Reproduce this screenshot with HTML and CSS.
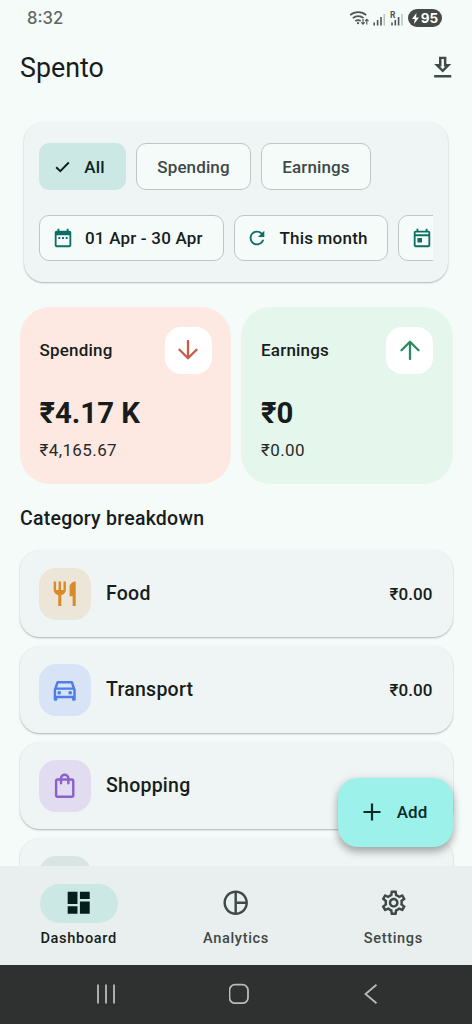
FILE: index.html
```html
<!DOCTYPE html>
<html lang="en">
<head>
<meta charset="utf-8">
<meta name="viewport" content="width=device-width, initial-scale=1">
<title>Spento</title>
<link rel="stylesheet" href="styles.css">
</head>
<body>
<div class="app">
  <div class="status">
    <span class="clock">8:32</span>
    <svg class="signals" width="56" height="20" viewBox="0 0 56 20" fill="none" stroke="#505553">
      <path d="M1.200 7.200a12 12 0 0 1 16 0M3.800 10.200a8.300 8.300 0 0 1 10.800 0M6.300 13a4.800 4.800 0 0 1 5.400 0" stroke-width="1.700"/>
      <circle cx="9" cy="15.200" r="1.100" fill="#505553" stroke="none"/>
      <path d="M14 11v5M12.300 14.400L14 16.200l1.700-1.800M17.800 16.500v-5M16.100 13.200l1.700-1.800 1.700 1.800" stroke-width="1.100"/>
      <path d="M25.200 14.500v3M28.600 12v5.500M32 9v8.500" stroke-width="1.600"/>
      <path d="M35.200 6v11.500" stroke-width="1.200" stroke="#adb2b0"/>
      <path d="M43 14.500v3M46.300 12v5.500M49.600 9v8.500" stroke-width="1.600"/>
      <path d="M53 6v11.500" stroke-width="1.200" stroke="#adb2b0"/>
      <text x="41" y="10.300" class="roaming">R</text>
    </svg>
    <span class="battery"><svg width="7" height="11" viewBox="0 0 7 11"><path d="M4.500 0L0 6h2.800L2 11l5-6.500H4z" fill="#fff"/></svg>95</span>
  </div>
  <header class="appbar">
    <h1>Spento</h1>
    <svg class="ic29 dl" viewBox="0 0 24 24"><path d="M19 9h-4V3H9v6H5l7 7 7-7zm-8 2V5h2v6h1.170L12 13.170 9.830 11H11zm-6 7h14v2H5z"/></svg>
  </header>
  <main class="content">
    <section class="filters">
      <div class="row">
        <button class="chip selected"><svg class="check" width="15" height="12" viewBox="0 0 15 12"><path d="M1.200 6.200l4.100 4L13.800 1.500" fill="none" stroke="#0d2221" stroke-width="2"/></svg>All</button>
        <button class="chip w-spending">Spending</button>
        <button class="chip w-earnings">Earnings</button>
      </div>
      <div class="row dates">
        <button class="chip date w-range"><svg class="ic22" viewBox="0 0 24 24"><path d="M9 11H7v2h2v-2zm4 0h-2v2h2v-2zm4 0h-2v2h2v-2zm2-7h-1V2h-2v2H8V2H6v2H5c-1.110 0-1.990.9-1.990 2L3 20c0 1.100.890 2 2 2h14c1.100 0 2-.9 2-2V6c0-1.100-.9-2-2-2zm0 16H5V9h14v11z"/></svg>01 Apr - 30 Apr</button>
        <button class="chip date w-month"><svg class="ic22" viewBox="0 0 24 24"><path d="M17.650 6.350C16.200 4.900 14.210 4 12 4c-4.420 0-7.990 3.580-7.990 8s3.570 8 7.990 8c3.730 0 6.840-2.550 7.730-6h-2.080c-.820 2.330-3.040 4-5.650 4-3.310 0-6-2.690-6-6s2.690-6 6-6c1.660 0 3.140.690 4.220 1.780L13 11h7V4l-2.350 2.350z"/></svg>This month</button>
        <button class="chip date w-today"><svg class="ic22" viewBox="0 0 24 24"><path d="M19 4h-1V2h-2v2H8V2H6v2H5c-1.110 0-1.990.9-1.990 2L3 20c0 1.100.890 2 2 2h14c1.100 0 2-.9 2-2V6c0-1.100-.9-2-2-2zm0 16H5V10h14v10zm0-12H5V6h14v2zM7 12h5v5H7z"/></svg></button>
      </div>
    </section>
    <section class="totals">
      <article class="total spending">
        <div class="total-head"><span>Spending</span><span class="badge"><svg width="20" height="20" viewBox="0 0 20 20"><path d="M10 1v17M1.500 9.800L10 18.300l8.500-8.500"/></svg></span></div>
        <div class="amount">₹4.17 K</div>
        <div class="exact">₹4,165.67</div>
      </article>
      <article class="total earnings">
        <div class="total-head"><span>Earnings</span><span class="badge"><svg width="20" height="20" viewBox="0 0 20 20"><path d="M10 19V2M1.500 10.200L10 1.700l8.500 8.500"/></svg></span></div>
        <div class="amount">₹0</div>
        <div class="exact">₹0.00</div>
      </article>
    </section>
    <h2>Category breakdown</h2>
    <ul class="list">
      <li class="item"><span class="tile food"><svg class="ic29" viewBox="0 0 24 24"><path d="M11 9H9V2H7v7H5V2H3v7c0 2.120 1.660 3.840 3.750 3.970V22h2.500v-9.030C11.340 12.840 13 11.120 13 9V2h-2v7zm5-3v8h2.500v8H21V2c-2.760 0-5 2.240-5 4z"/></svg></span><span class="name">Food</span><span class="value">₹0.00</span></li>
      <li class="item"><span class="tile transport"><svg class="ic29" viewBox="0 0 24 24"><path d="M18.920 6.010C18.720 5.420 18.160 5 17.500 5h-11c-.660 0-1.210.420-1.420 1.010L3 12v8c0 .550.450 1 1 1h1c.550 0 1-.450 1-1v-1h12v1c0 .550.450 1 1 1h1c.550 0 1-.450 1-1v-8l-2.080-5.990zM6.850 7h10.290l1.080 3.110H5.770L6.850 7zM19 17H5v-5h14v5z"/><circle cx="7.500" cy="14.500" r="1.500"/><circle cx="16.500" cy="14.500" r="1.500"/></svg></span><span class="name">Transport</span><span class="value">₹0.00</span></li>
      <li class="item"><span class="tile shopping"><svg class="ic29" viewBox="0 0 24 24"><path d="M18 6h-2c0-2.210-1.790-4-4-4S8 3.790 8 6H6c-1.100 0-2 .9-2 2v12c0 1.100.9 2 2 2h12c1.100 0 2-.9 2-2V8c0-1.100-.9-2-2-2zm-6-2c1.100 0 2 .9 2 2h-4c0-1.100.9-2 2-2zm6 16H6V8h2v2c0 .550.450 1 1 1s1-.450 1-1V8h4v2c0 .550.450 1 1 1s1-.450 1-1V8h2v12z"/></svg></span><span class="name">Shopping</span></li>
      <li class="item"><span class="tile other"></span></li>
    </ul>
    <button class="fab"><svg width="18" height="18" viewBox="0 0 18 18"><path d="M9 .5v17M.5 9h17" stroke="#0b2a28" stroke-width="2.200"/></svg>Add</button>
  </main>
  <nav class="tabs">
    <a class="tab active"><span class="pill"><svg class="ic29" viewBox="0 0 24 24"><path d="M3 13h8V3H3v10zm0 8h8v-6H3v6zm10 0h8V11h-8v10zm0-18v6h8V3h-8z"/></svg></span>Dashboard</a>
    <a class="tab"><span class="pill"><svg class="ic29" viewBox="0 0 24 24"><path d="M12 2C6.480 2 2 6.480 2 12s4.480 10 10 10 10-4.480 10-10S17.520 2 12 2zm1 2.070c3.610.450 6.480 3.330 6.930 6.930H13V4.070zM4 12c0-4.060 3.070-7.440 7-7.930v15.870c-3.930-.5-7-3.880-7-7.940zm9 7.930V13h6.930c-.450 3.610-3.320 6.480-6.930 6.930z"/></svg></span>Analytics</a>
    <a class="tab"><span class="pill"><svg class="ic29" viewBox="0 0 24 24"><path d="M19.43 12.98c.04-.32.07-.64.07-.98 0-.34-.03-.66-.07-.98l2.110-1.650c.19-.15.24-.42.12-.64l-2-3.460c-.09-.16-.26-.25-.44-.25-.06 0-.12.01-.17.03l-2.490 1c-.52-.4-1.080-.73-1.690-.98l-.38-2.650C14.46 2.180 14.25 2 14 2h-4c-.25 0-.46.18-.49.42l-.38 2.650c-.61.25-1.170.59-1.690.98l-2.490-1c-.06-.02-.12-.03-.18-.03-.17 0-.34.09-.43.25l-2 3.460c-.13.22-.07.49.12.64l2.110 1.650c-.04.32-.07.65-.07.98 0 .33.03.66.07.98l-2.110 1.650c-.19.15-.24.42-.12.64l2 3.460c.09.16.26.25.44.25.06 0 .12-.01.17-.03l2.490-1c.52.4 1.080.73 1.690.98l.38 2.650c.03.24.24.42.49.42h4c.25 0 .46-.18.49-.42l.38-2.650c.61-.25 1.170-.59 1.690-.98l2.490 1c.06.02.12.03.18.03.17 0 .34-.09.43-.25l2-3.460c.12-.22.07-.49-.12-.64l-2.110-1.650zm-1.980-1.710c.04.31.05.52.05.73 0 .21-.02.43-.05.73l-.14 1.130.89.7 1.080.84-.7 1.210-1.270-.51-1.040-.42-.9.68c-.43.32-.84.56-1.250.73l-1.060.43-.16 1.130-.2 1.350h-1.400l-.19-1.350-.16-1.130-1.060-.43c-.43-.18-.83-.41-1.230-.71l-.91-.7-1.060.43-1.270.51-.7-1.210 1.080-.84.89-.7-.14-1.130c-.03-.31-.05-.54-.05-.74s.02-.43.05-.73l.14-1.130-.89-.7-1.080-.84.7-1.210 1.270.51 1.040.42.9-.68c.43-.32.84-.56 1.250-.73l1.060-.43.16-1.130.2-1.350h1.390l.19 1.350.16 1.130 1.060.43c.43.18.83.41 1.230.71l.91.7 1.060-.43 1.270-.51.7 1.210-1.070.85-.89.7.14 1.130zM12 8c-2.210 0-4 1.790-4 4s1.790 4 4 4 4-1.790 4-4-1.790-4-4-4zm0 6c-1.100 0-2-.9-2-2s.9-2 2-2 2 .9 2 2-.9 2-2 2z"/></svg></span>Settings</a>
  </nav>
  <div class="sysnav">
    <svg width="20" height="20" viewBox="0 0 20 20"><path d="M2 .5v19M10 .5v19M18 .5v19"/></svg>
    <svg width="22" height="22" viewBox="0 0 22 22"><rect x="1.500" y="1.700" width="18.500" height="18.500" rx="5.500"/></svg>
    <svg width="14" height="20" viewBox="0 0 14 20"><path d="M12.500 .8L1.500 10l11 9.200"/></svg>
  </div>
</div>
</body>
</html>
```
FILE: styles.css
```css
* { box-sizing: border-box; }
body { margin: 0; font-family: Roboto, "Noto Sans", sans-serif; color: #171d1c; background: #f5fbf9; }
h1, h2, ul { margin: 0; padding: 0; font-weight: 400; list-style: none; }
button { font: inherit; border: 0; padding: 0; color: inherit; }
svg { display: block; flex: none; }
.app { width: 472px; height: 1024px; overflow: hidden; display: flex; flex-direction: column; }

.status { height: 37px; flex: none; display: flex; align-items: center; padding: 0 30px 1px 27px; }
.clock { flex: 1; font: 500 16.600px Inter, sans-serif; color: #606664; }
.signals { margin-right: 3px; }
.roaming { font: 700 8.500px Roboto, sans-serif; fill: #505553; stroke: none; }
.battery { width: 34px; height: 18px; border-radius: 9px; background: #454947; color: #fff; font: 700 13.500px/18px Inter, sans-serif; display: flex; align-items: center; justify-content: center; gap: 2px; }

.appbar { height: 61px; flex: none; display: flex; align-items: center; justify-content: space-between; padding: 0 15px 0 20px; }
.appbar h1 { font-size: 26.800px; line-height: 36px; }
.ic29 { width: 29.400px; height: 29.400px; fill: currentColor; }
.ic22 { width: 22px; height: 22px; fill: #0c6e67; }
.dl { color: #3f4947; }

.content { position: relative; flex: 1; min-height: 0; overflow: hidden; padding: 24px 19.500px 0; }
.filters { margin: 0 4.500px; height: 160px; padding: 21px 15.500px 0 15px; border-radius: 20px; background: #eff5f4; box-shadow: 0 1px 2px rgba(0,0,0,.28); }
.row { display: flex; gap: 10px; overflow: hidden; }
.dates { margin-top: 25px; }
.chip { flex: none; height: 47px; border: 1px solid #bec6c4; border-radius: 10px; background: #f5fbf9; color: #3f4947; font-size: 17px; font-weight: 500; letter-spacing: .12px; display: flex; align-items: center; justify-content: center; }
.selected { width: 87px; border: 0; background: #cce8e5; color: #0d2221; gap: 14px; padding-right: 5px; }
.w-spending { width: 115px; }
.w-earnings { width: 110px; }
.date { height: 46px; color: #171d1c; justify-content: flex-start; padding-left: 11.500px; gap: 11.500px; letter-spacing: .2px; }
.w-range { width: 184.500px; }
.w-month { width: 154.500px; }
.w-today { width: 90px; }

.totals { display: grid; grid-template-columns: 1fr 1fr; gap: 10px; margin-top: 25px; }
.total { height: 177px; border-radius: 30px; padding: 19.500px 19.500px 19.500px 20px; }
.total.spending { background: #fee9e2; }
.total.earnings { background: #e5f6ec; }
.total-head { display: flex; align-items: center; justify-content: space-between; font-size: 17px; font-weight: 500; letter-spacing: .2px; }
.badge { width: 47px; height: 47px; border-radius: 16px; background: #fff; display: grid; place-items: center; }
.badge path { fill: none; stroke-width: 2.300; stroke-linecap: round; stroke-linejoin: round; }
.spending .badge path { stroke: #c85a4a; }
.earnings .badge path { stroke: #2d8a60; }
.amount { margin-top: 21px; font-size: 29.400px; line-height: 36px; font-weight: 700; }
.exact { margin-top: 7px; font-size: 17px; line-height: 24px; letter-spacing: .4px; color: #252b2a; }

h2 { margin: 23px 0 0 .5px; font-size: 19.500px; line-height: 24px; font-weight: 500; letter-spacing: .25px; }
.list { margin-top: 19px; display: flex; flex-direction: column; gap: 9px; }
.item { height: 87px; display: flex; align-items: center; padding: 0 20px 0 19.500px; border-radius: 20px; background: #eff5f4; box-shadow: 0 1px 2px rgba(0,0,0,.28); }
.tile { width: 52px; height: 52px; border-radius: 17px; display: grid; place-items: center; padding-right: 1px; }
.food { background: #ece6d8; color: #d98a2b; }
.transport { background: #d9e3f6; color: #4c7de8; }
.shopping { background: #e1dcf0; color: #8b62cb; }
.other { background: #d9e4e3; }
.name { flex: 1; margin-left: 15px; font-size: 19.500px; font-weight: 500; letter-spacing: .25px; }
.value { font-size: 17px; font-weight: 500; letter-spacing: .1px; }
.fab { position: absolute; right: 19.500px; bottom: 19.500px; width: 115px; height: 69px; border-radius: 20px; background: #9cf2ea; color: #0b2a28; font-size: 17px; font-weight: 500; letter-spacing: .1px; display: flex; align-items: center; justify-content: center; gap: 16px; box-shadow: 0 5px 8px rgba(0,0,0,.28), 0 1px 10px rgba(0,0,0,.1); }

.tabs { height: 99px; flex: none; background: #e9efee; display: grid; grid-template-columns: repeat(3, 1fr); padding-top: 17.500px; }
.tab { display: flex; flex-direction: column; align-items: center; gap: 5px; font-size: 14.600px; line-height: 20px; font-weight: 500; letter-spacing: .65px; color: #3f4947; }
.pill { width: 78px; height: 39px; border-radius: 20px; display: grid; place-items: center; }
.active { color: #171d1c; }
.active .pill { background: #cce8e5; color: #051f1d; }

.sysnav { height: 59px; flex: none; background: #2f3130; display: flex; align-items: center; justify-content: space-between; padding: 0 94px 1px 96px; }
.sysnav rect { transform: translateX(-1px); }
.sysnav path, .sysnav rect { fill: none; stroke: #b9bbba; stroke-width: 1.800; }
```
